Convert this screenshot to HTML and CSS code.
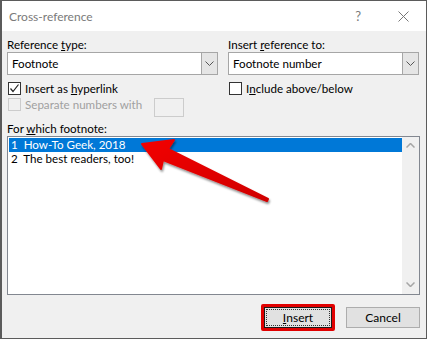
FILE: index.html
```html
<!DOCTYPE html>
<html lang="en">
<head>
    <meta charset="UTF-8">
    <title>Cross-reference</title>
    <link rel="stylesheet" href="styles.css">
</head>
<body>
    <div class="dialog">
        <div class="titlebar">
            <span class="title">Cross-reference</span>
            <span class="help">?</span>
            <svg class="close" width="11" height="11" viewBox="0 0 11 11"><path d="M0.5 0.5L10.5 10.5M10.5 0.5L0.5 10.5" stroke="#777" stroke-width="1" fill="none"/></svg>
        </div>

        <div class="content">
            <div class="cols">
                <div class="col col-left">
                    <div class="label">Reference <u>t</u>ype:</div>
                    <div class="select">
                        <span class="select-text">Footnote</span>
                        <span class="drop"><svg width="9" height="5" viewBox="0 0 9 5"><path d="M0.5 0.5L4.5 4.5L8.5 0.5" stroke="#555" fill="none"/></svg></span>
                    </div>
                    <div class="check-row">
                        <span class="box"><svg width="11" height="11" viewBox="0 0 11 11"><path d="M1.5 5.5L4 8.5L9.5 1.5" stroke="#222" stroke-width="1.2" fill="none"/></svg></span>
                        <span>Insert as <u>h</u>yperlink</span>
                    </div>
                    <div class="check-row disabled">
                        <span class="box"></span>
                        <span>Separate numbers with</span>
                        <span class="small-input"></span>
                    </div>
                </div>
                <div class="col col-right">
                    <div class="label">Insert <u>r</u>eference to:</div>
                    <div class="select">
                        <span class="select-text">Footnote number</span>
                        <span class="drop"><svg width="9" height="5" viewBox="0 0 9 5"><path d="M0.5 0.5L4.5 4.5L8.5 0.5" stroke="#555" fill="none"/></svg></span>
                    </div>
                    <div class="check-row">
                        <span class="box"></span>
                        <span>I<u>n</u>clude above/below</span>
                    </div>
                </div>
            </div>

            <div class="label list-label">For <u>w</u>hich footnote:</div>
            <div class="listbox">
                <div class="items">
                    <div class="item selected">1&nbsp; How-To Geek, 2018</div>
                    <div class="item">2&nbsp; The best readers, too!</div>
                </div>
                <div class="scrollbar">
                    <svg width="9" height="5" viewBox="0 0 9 5"><path d="M0.5 4.5L4.5 0.5L8.5 4.5" stroke="#a6a6a6" stroke-width="1.5" fill="none"/></svg>
                    <svg width="9" height="5" viewBox="0 0 9 5"><path d="M0.5 0.5L4.5 4.5L8.5 0.5" stroke="#a6a6a6" stroke-width="1.5" fill="none"/></svg>
                </div>
            </div>

            <div class="buttons">
                <span class="highlight">
                    <button class="btn btn-default"><span class="focus"><u>I</u>nsert</span></button>
                </span>
                <button class="btn">Cancel</button>
            </div>
        </div>

        <!-- red annotation arrow -->
        <svg class="arrow" width="427" height="339" viewBox="0 0 427 339">
            <defs>
                <linearGradient id="red" x1="0" y1="0" x2="1" y2="1">
                    <stop offset="0" stop-color="#f20000"/>
                    <stop offset="1" stop-color="#d00000"/>
                </linearGradient>
                <filter id="shadow" x="-10%" y="-10%" width="130%" height="140%">
                    <feDropShadow dx="1" dy="2" stdDeviation="1.2" flood-color="#000" flood-opacity="0.45"/>
                </filter>
            </defs>
            <polygon points="142,144 174,140 168,149 268,199 267,201 163,160 161,169"
                     fill="url(#red)" stroke="url(#red)" stroke-width="2" stroke-linejoin="round" filter="url(#shadow)"/>
        </svg>
    </div>
</body>
</html>
```

FILE: styles.css
```css
* {
    box-sizing: border-box;
}

body {
    margin: 0;
    font-family: Lato, 'Noto Sans', sans-serif;
    font-size: 11.6px;
    color: #000;
}

u {
    text-decoration: underline;
    text-underline-offset: 1px;
}

.dialog {
    position: relative;
    width: 427px;
    height: 339px;
    border: 1px solid #5b5b5b;
    border-width: 1px 1px 1px 2px;
    background: #f0f0f0;
    display: flex;
    flex-direction: column;
}

.titlebar {
    height: 30px;
    background: #fff;
    display: flex;
    align-items: center;
    padding: 0 0 0 7px;
}

.title {
    color: #7a7a7a;
    font-size: 12px;
    flex: 1;
}

.help {
    color: #7a7a7a;
    font-size: 13px;
    margin-right: 37px;
}

.close {
    margin-right: 17px;
}

.content {
    flex: 1;
    padding: 6px 6px 0 5px;
    display: flex;
    flex-direction: column;
}

.cols {
    display: flex;
    gap: 10px;
}

.col-left {
    width: 211px;
}

.col-right {
    width: 191px;
}

.label {
    height: 15px;
    line-height: 15px;
    white-space: nowrap;
}

.select {
    height: 23px;
    background: #fff;
    border: 1px solid #a6a6a6;
    display: flex;
    align-items: stretch;
}

.select-text {
    flex: 1;
    line-height: 21px;
    padding-left: 4px;
}

.drop {
    width: 16px;
    background: #e5e5e5;
    border-left: 1px solid #a6a6a6;
    display: flex;
    align-items: center;
    justify-content: center;
}

.check-row {
    display: flex;
    align-items: center;
    height: 16px;
    margin-top: 5px;
    padding-left: 1px;
    white-space: nowrap;
}

.check-row.disabled {
    height: 19px;
    margin-top: 2px;
    align-items: flex-start;
    color: #a0a0a0;
}

.check-row.disabled span:nth-child(2) {
    line-height: 14px;
}

.box {
    width: 13px;
    height: 13px;
    border: 1px solid #333;
    background: #fff;
    margin-right: 4px;
    display: flex;
    align-items: center;
    justify-content: center;
    flex: none;
}

.disabled .box {
    border-color: #cccccc;
    background: #f0f0f0;
}

.small-input {
    width: 30px;
    height: 19px;
    margin-left: 12px;
    border: 1px solid #cccccc;
    background: #f0f0f0;
}

.list-label {
    margin-top: 4px;
}

.listbox {
    height: 159px;
    border: 1px solid #828790;
    background: #fff;
    display: flex;
    padding: 1px 0 0 1px;
}

.items {
    flex: 1;
}

.item {
    height: 14px;
    line-height: 14px;
    padding-left: 2px;
    white-space: nowrap;
}

.item.selected {
    background: #0078d7;
    color: #fff;
}

.scrollbar {
    width: 17px;
    background: #f0f0f0;
    margin-top: -1px;
    display: flex;
    flex-direction: column;
    justify-content: space-between;
    align-items: center;
    padding: 6px 0 7px;
}

.buttons {
    margin-top: 9px;
    display: flex;
    justify-content: flex-end;
    align-items: center;
    gap: 11px;
}

.highlight {
    border: 3px solid #e00000;
    border-radius: 2px;
    display: flex;
}

.btn {
    font-family: inherit;
    font-size: 12px;
    width: 74px;
    height: 21px;
    padding: 0;
    background: #e1e1e1;
    border: 1px solid #adadad;
    color: #000;
}

.btn-default {
    width: 68px;
    border-color: #1a1a1a;
    padding: 1px;
}

.focus {
    display: flex;
    align-items: center;
    justify-content: center;
    height: 100%;
    border: 1px dotted #333;
}

.arrow {
    position: absolute;
    left: -2px;
    top: -1px;
    pointer-events: none;
}
```
